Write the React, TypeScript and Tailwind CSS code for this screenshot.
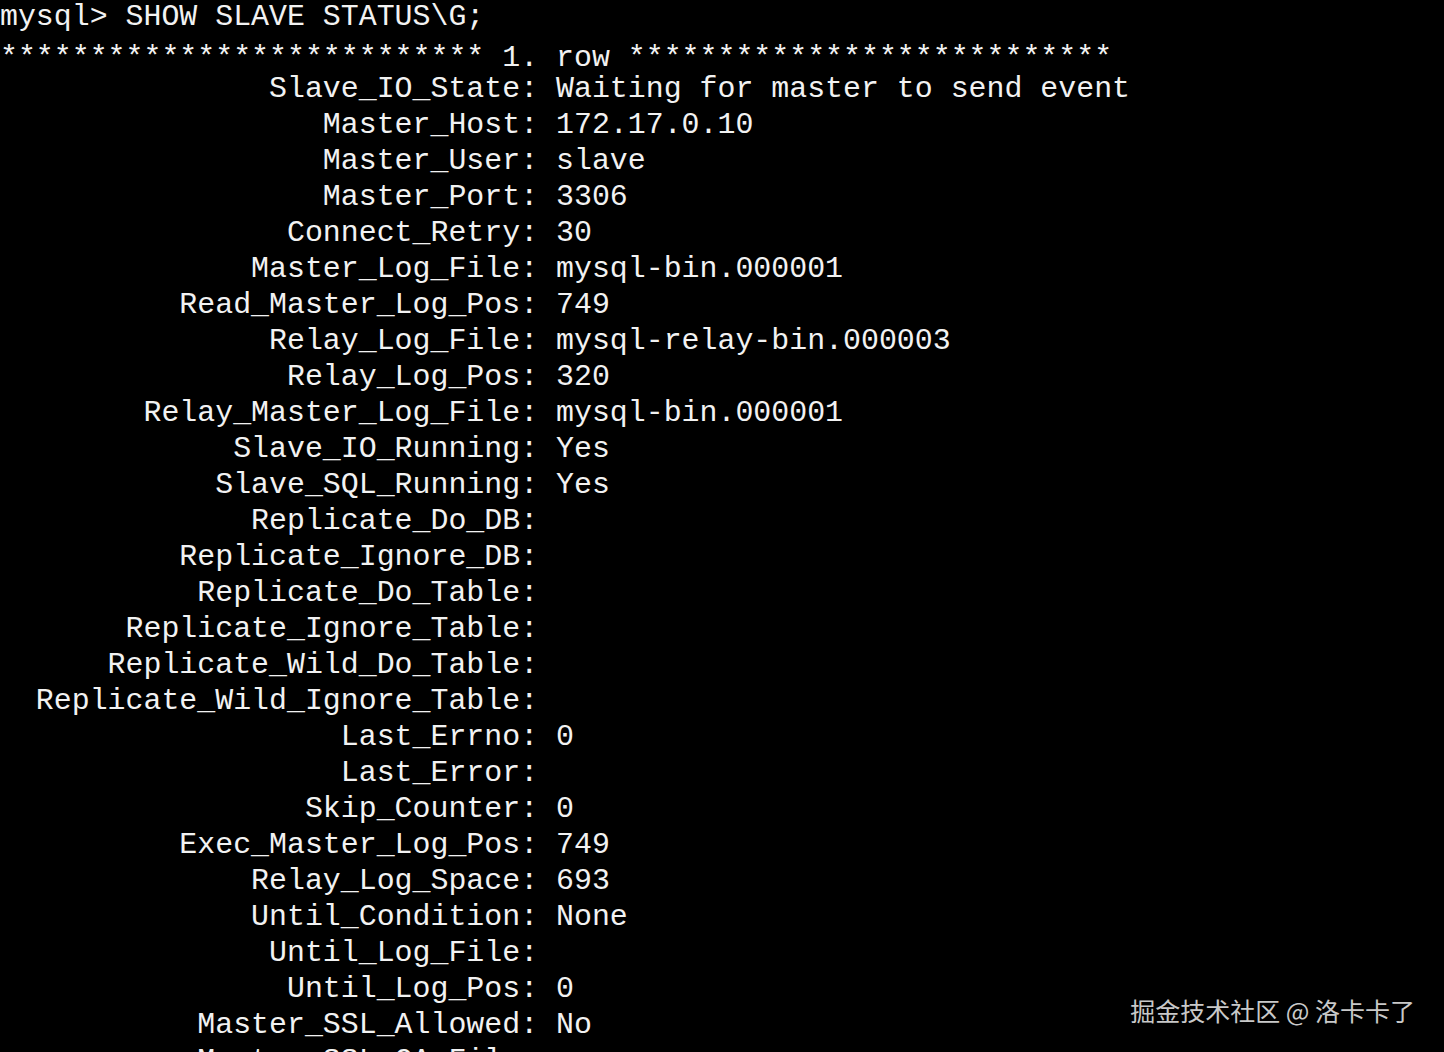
import React from 'react';

const rows: [string, string][] = [
  ['Slave_IO_State', 'Waiting for master to send event'],
  ['Master_Host', '172.17.0.10'],
  ['Master_User', 'slave'],
  ['Master_Port', '3306'],
  ['Connect_Retry', '30'],
  ['Master_Log_File', 'mysql-bin.000001'],
  ['Read_Master_Log_Pos', '749'],
  ['Relay_Log_File', 'mysql-relay-bin.000003'],
  ['Relay_Log_Pos', '320'],
  ['Relay_Master_Log_File', 'mysql-bin.000001'],
  ['Slave_IO_Running', 'Yes'],
  ['Slave_SQL_Running', 'Yes'],
  ['Replicate_Do_DB', ''],
  ['Replicate_Ignore_DB', ''],
  ['Replicate_Do_Table', ''],
  ['Replicate_Ignore_Table', ''],
  ['Replicate_Wild_Do_Table', ''],
  ['Replicate_Wild_Ignore_Table', ''],
  ['Last_Errno', '0'],
  ['Last_Error', ''],
  ['Skip_Counter', '0'],
  ['Exec_Master_Log_Pos', '749'],
  ['Relay_Log_Space', '693'],
  ['Until_Condition', 'None'],
  ['Until_Log_File', ''],
  ['Until_Log_Pos', '0'],
  ['Master_SSL_Allowed', 'No'],
  ['Master_SSL_CA_File', ''],
];

export default function App() {
  const stars = '*'.repeat(27);
  const lines = [
    'mysql> SHOW SLAVE STATUS\\G;',
    `${stars} 1. row ${stars}`,
    ...rows.map(([k, v]) => `${k.padStart(29, ' ')}: ${v}`),
  ];

  return (
    <div className="relative w-[1444px] h-[1052px] overflow-hidden bg-black">
      <pre className="mt-[-1px] font-['Liberation_Mono',monospace] text-[29.9px] leading-[36px] text-[#f2f2f2] whitespace-pre">
        {lines.map((l, i) => (
          <div key={i} className={i === 1 ? 'relative top-[5px]' : ''}>
            {l}
          </div>
        ))}
      </pre>
      <div className="absolute right-[29px] top-[993px] font-['Noto_Sans_CJK_SC',sans-serif] text-[25px] leading-[34px] text-[#c9c9c9]">
        掘金技术社区 @ 洛卡卡了
      </div>
    </div>
  );
}
